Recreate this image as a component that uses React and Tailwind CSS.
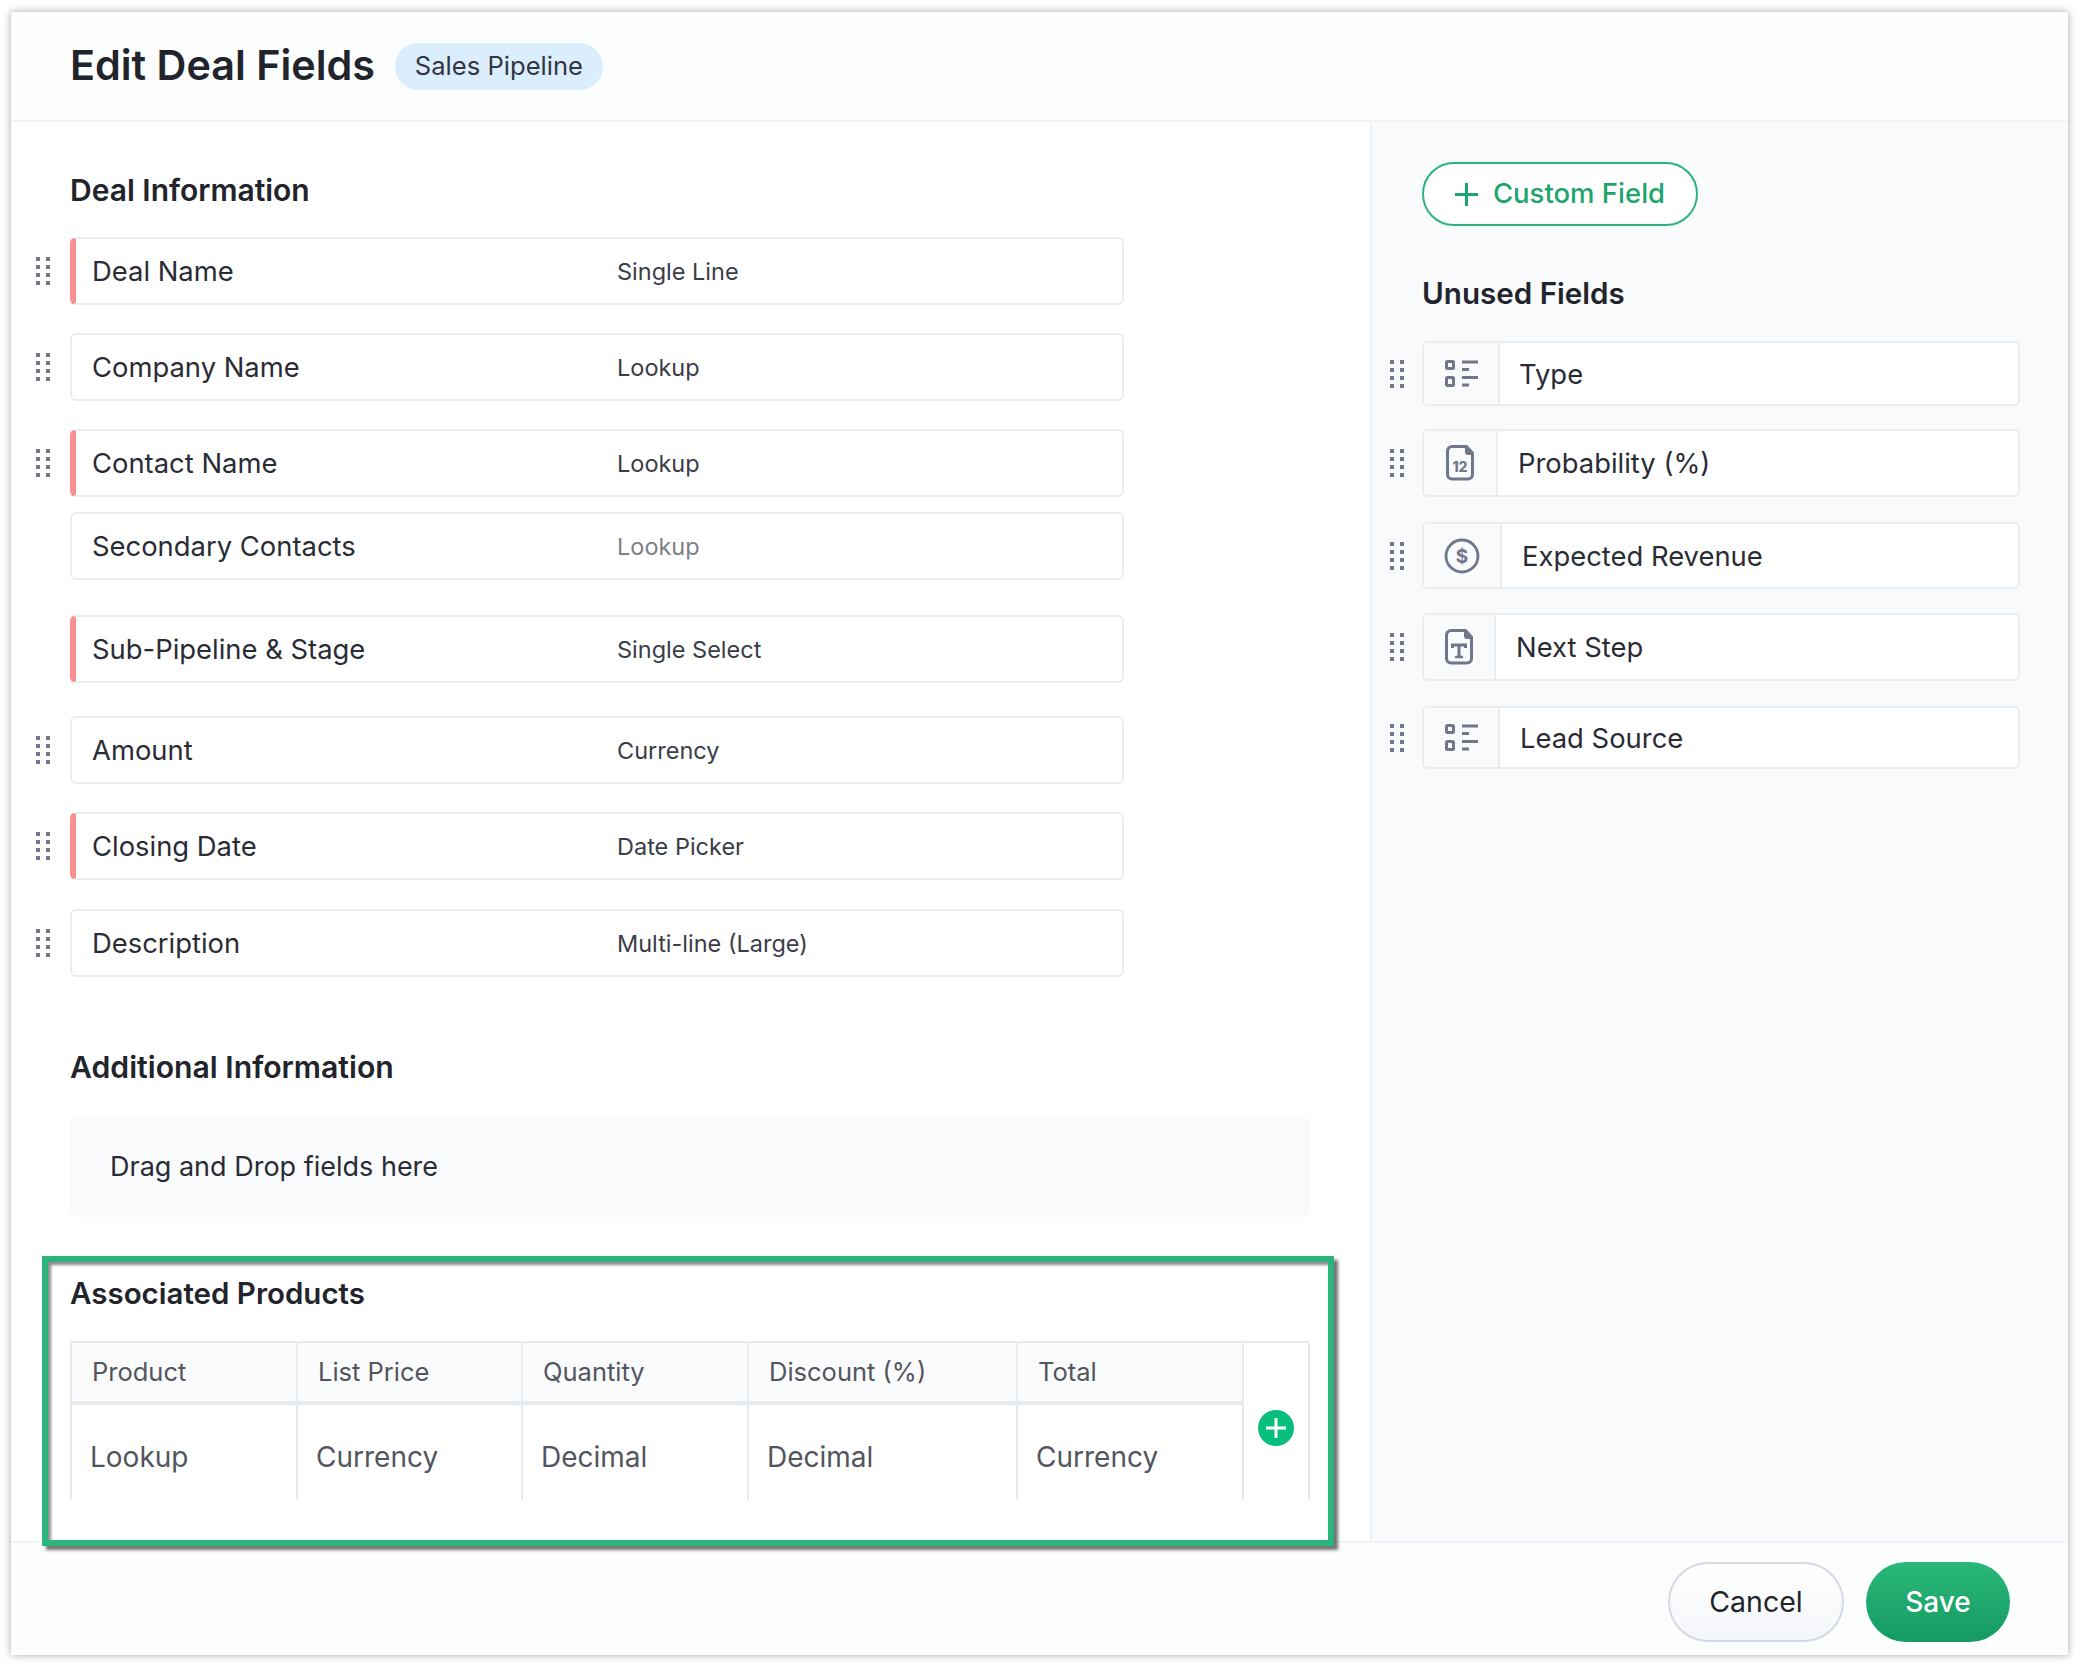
const font = { fontFamily: 'Inter, "Noto Sans", sans-serif' }

const dealFields = [
    { label: 'Deal Name', type: 'Single Line', required: true, handle: true, mt: 'mt-[27px]' },
    { label: 'Company Name', type: 'Lookup', handle: true, mt: 'mt-[28px]' },
    { label: 'Contact Name', type: 'Lookup', required: true, handle: true, mt: 'mt-[28px]' },
    { label: 'Secondary Contacts', type: 'Lookup', muted: true, mt: 'mt-[15px]' },
    { label: 'Sub-Pipeline & Stage', type: 'Single Select', required: true, mt: 'mt-[35px]' },
    { label: 'Amount', type: 'Currency', handle: true, mt: 'mt-[33px]' },
    { label: 'Closing Date', type: 'Date Picker', required: true, handle: true, mt: 'mt-[28px]' },
    { label: 'Description', type: 'Multi-line (Large)', handle: true, mt: 'mt-[29px]' },
]

const unusedFields = [
    { label: 'Type', icon: 'list', box: 'h-[65px] mt-[28px]', cell: 'w-[76px]', pad: 'pl-[19px]' },
    { label: 'Probability (%)', icon: 'number', box: 'h-[68px] mt-[23px]', cell: 'w-[74px]', pad: 'pl-[20px]' },
    { label: 'Expected Revenue', icon: 'dollar', box: 'h-[67px] mt-[25px]', cell: 'w-[78px]', pad: 'pl-[20px]' },
    { label: 'Next Step', icon: 'text', box: 'h-[68px] mt-[24px]', cell: 'w-[72px]', pad: 'pl-[20px]' },
    { label: 'Lead Source', icon: 'list', box: 'h-[63px] mt-[25px]', cell: 'w-[76px]', pad: 'pl-[20px]' },
]

const productColumns = [
    { title: 'Product', type: 'Lookup', width: 'w-[226px]' },
    { title: 'List Price', type: 'Currency', width: 'w-[225px]' },
    { title: 'Quantity', type: 'Decimal', width: 'w-[226px]' },
    { title: 'Discount (%)', type: 'Decimal', width: 'w-[269px]' },
    { title: 'Total', type: 'Currency', width: 'w-[226px]' },
]

const DragHandle = () => (
    <svg width="14" height="28" viewBox="0 0 14 28" className="block shrink-0 text-[#70778a]" fill="currentColor">
        {[0, 8, 16, 24].map((y) => (
            <g key={y}>
                <rect x="0" y={y} width="4" height="4" />
                <rect x="10" y={y} width="4" height="4" />
            </g>
        ))}
    </svg>
)

const PlusIcon = ({ size, weight }) => (
    <svg width={size} height={size} viewBox={`0 0 ${size} ${size}`} className="shrink-0" fill="none" stroke="currentColor" strokeWidth={weight}>
        <path d={`M0 ${size / 2}H${size}M${size / 2} 0V${size}`} />
    </svg>
)

const FileOutline = () => (
    <>
        <path d="M7 1.5h14.5l6 6.5v21.5a4.5 4.5 0 0 1-4.5 4.5H7a4.5 4.5 0 0 1-4.5-4.5V6A4.5 4.5 0 0 1 7 1.5z" stroke="#70778a" strokeWidth="3" />
        <path d="M20 1.5l8 8.5h-5a3 3 0 0 1-3-3z" fill="#70778a" />
    </>
)

const FieldIcon = ({ name }) => {
    if (name === 'list') {
        return (
            <svg width="33" height="27" viewBox="0 0 33 27" fill="none" stroke="#70778a" strokeWidth="3">
                <rect x="1.5" y="1.5" width="7" height="7" rx="1" />
                <rect x="1.5" y="17.5" width="7" height="8" rx="1" />
                <path d="M17 2h16M17 9.5h7M17 17.5h16M17 25h7" />
            </svg>
        )
    }
    if (name === 'number') {
        return (
            <svg width="30" height="36" viewBox="0 0 30 36" fill="none">
                <FileOutline />
                <text x="15" y="27" textAnchor="middle" fontSize="14" fontWeight="800" fill="#70778a" style={font}>12</text>
            </svg>
        )
    }
    if (name === 'dollar') {
        return (
            <svg width="36" height="36" viewBox="0 0 36 36" fill="none">
                <circle cx="18" cy="18" r="16" stroke="#70778a" strokeWidth="2.8" />
                <text x="18" y="25" textAnchor="middle" fontSize="19" fontWeight="700" fill="#70778a" style={font}>$</text>
            </svg>
        )
    }
    return (
        <svg width="30" height="36" viewBox="0 0 30 36" fill="none">
            <FileOutline />
            <path d="M8.5 19v-3h13v3M15 16v12" stroke="#70778a" strokeWidth="3" />
            <path d="M11 28h8" stroke="#70778a" strokeWidth="2.5" />
        </svg>
    )
}

const FieldRow = ({ field }) => (
    <div className={`flex items-center gap-[20px] ${field.mt}`}>
        <div className="w-[14px] shrink-0">{field.handle && <DragHandle />}</div>
        <div
            className={`flex h-[68px] w-[1054px] items-center overflow-hidden rounded-[6px] border-2 border-[#e8edf2] bg-white pt-[2px] ${
                field.required ? 'border-l-[6px] border-l-[#fa8f8f]' : ''
            }`}
        >
            <span className={`shrink-0 text-[27.4px] text-[#2a2c35] ${field.required ? 'w-[541px] pl-[16px]' : 'w-[545px] pl-[20px]'}`}>{field.label}</span>
            <span className={`text-[23.5px] ${field.muted ? 'text-[#7d8088]' : 'text-[#3a3d47]'}`}>{field.type}</span>
        </div>
    </div>
)

export default function App() {
    return (
        <div className="h-[1666px] w-[2080px] bg-white pl-[11px] pt-[12px]" style={font}>
            <div className="flex h-[1643px] w-[2057px] flex-col bg-white shadow-[0_0_8px_rgba(0,0,0,0.35)]">
                {/* Header */}
                <div className="flex h-[110px] shrink-0 items-center gap-[20px] border-b-2 border-[#f1f4f6] bg-[#fcfefe] pl-[59px]">
                    <h1 className="text-[41.3px] font-semibold text-[#22242c]">Edit Deal Fields</h1>
                    <span className="flex h-[47px] w-[208px] items-center justify-center rounded-full bg-[#dbeefe] text-[25.6px] text-[#33363f]">Sales Pipeline</span>
                </div>

                <div className="flex min-h-0 flex-1">
                    {/* Left panel */}
                    <div className="w-[1359px] shrink-0 bg-white">
                        <div className="pl-[25px] pt-[48px]">
                            <h2 className="ml-[34px] flex h-[40px] items-center text-[30px] font-semibold text-[#22242c]">Deal Information</h2>
                            {dealFields.map((field) => (
                                <FieldRow key={field.label} field={field} />
                            ))}
                        </div>

                        <h2 className="ml-[59px] mt-[71px] flex h-[40px] items-center text-[30.2px] font-semibold text-[#22242c]">Additional Information</h2>
                        <div className="ml-[59px] mt-[29px] flex h-[100px] w-[1240px] items-center rounded-[6px] bg-[#f9fafb] pl-[40px] text-[27px] text-[#2a2c35]">
                            Drag and Drop fields here
                        </div>

                        {/* Associated products, highlighted */}
                        <div className="relative z-10 ml-[31px] mt-[39px] h-[290px] w-[1292px] border-[6px] border-[#2bb57c] bg-white pl-[22px] pt-[11px] shadow-[4px_4px_3px_rgba(0,0,0,0.55),inset_3px_3px_3px_rgba(0,0,0,0.45)]">
                            <h2 className="flex h-[40px] items-center text-[29.5px] font-semibold text-[#22242c]">Associated Products</h2>
                            <div className="mt-[28px] flex h-[159px] w-[1240px] border-x-2 border-t-2 border-[#e6ebf0]">
                                {productColumns.map((col) => (
                                    <div key={col.title} className={`flex shrink-0 flex-col border-r-2 border-[#e6ebf0] ${col.width}`}>
                                        <div className="flex h-[62px] shrink-0 items-center border-b-4 border-[#e6ebf0] bg-[#fafbfc] pl-[20px] text-[25.5px] text-[#53555e]">
                                            {col.title}
                                        </div>
                                        <div className="flex flex-1 items-center pl-[18px] pt-[8px] text-[28px] text-[#53555e]">{col.type}</div>
                                    </div>
                                ))}
                                <div className="flex flex-1 items-center justify-center pt-[13px]">
                                    <div className="flex h-[36px] w-[36px] items-center justify-center rounded-full bg-[#06bf7b] text-white">
                                        <PlusIcon size={20} weight={3} />
                                    </div>
                                </div>
                            </div>
                        </div>
                    </div>

                    {/* Right panel */}
                    <div className="flex-1 border-l-2 border-[#edf0f3] bg-[#f9fafc] pl-[18px] pt-[40px]">
                        <button className="ml-[32px] flex h-[64px] w-[276px] items-center justify-center gap-[15px] rounded-full border-2 border-[#2bb57c] bg-white text-[27.5px] font-medium text-[#1ea56c]">
                            <PlusIcon size={23} weight={3} />
                            Custom Field
                        </button>
                        <h2 className="ml-[32px] mt-[47px] flex h-[40px] items-center text-[29.6px] font-semibold text-[#22242c]">Unused Fields</h2>
                        {unusedFields.map((field) => (
                            <div key={field.label} className={`flex items-center gap-[18px] ${field.box}`}>
                                <DragHandle />
                                <div className="flex h-full w-[598px] items-center overflow-hidden rounded-[6px] border-2 border-[#e8edf2] bg-white">
                                    <div className={`flex h-full shrink-0 items-center justify-center border-r-2 border-[#e8edf2] bg-[#f9fafc] ${field.cell}`}>
                                        <FieldIcon name={field.icon} />
                                    </div>
                                    <span className={`pt-[2px] text-[27.4px] text-[#2a2c35] ${field.pad}`}>{field.label}</span>
                                </div>
                            </div>
                        ))}
                    </div>
                </div>

                {/* Footer */}
                <div className="flex h-[114px] shrink-0 items-start justify-end gap-[22px] border-t-2 border-[#f1f4f6] bg-[#fcfefe] pr-[58px] pt-[19px]">
                    <button className="h-[80px] w-[176px] rounded-full border-2 border-[#d3dae5] bg-gradient-to-b from-white to-[#f3f6fa] text-[28.5px] text-[#22242c]">Cancel</button>
                    <button className="h-[80px] w-[144px] rounded-full bg-gradient-to-b from-[#2bb87a] to-[#139a62] text-[28px] font-medium text-white">Save</button>
                </div>
            </div>
        </div>
    )
}
